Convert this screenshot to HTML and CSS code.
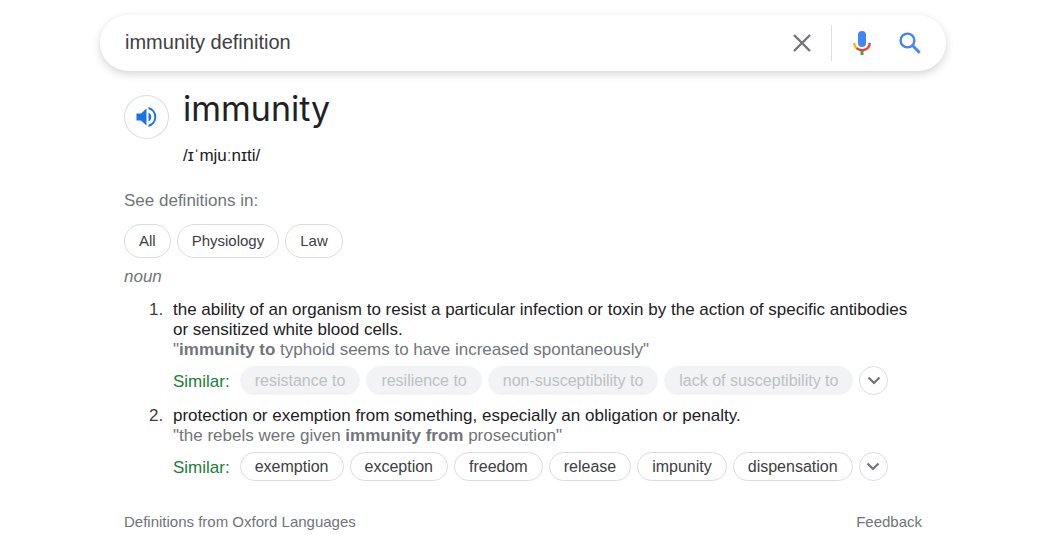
FILE: index.html
```html
<!DOCTYPE html>
<html lang="en">
<head>
<meta charset="utf-8">
<meta name="viewport" content="width=device-width, initial-scale=1">
<title>immunity definition</title>
<link rel="stylesheet" href="styles.css">
</head>
<body>
<main class="page">
  <form class="search" role="search">
    <input class="search-input" type="text" value="immunity definition" aria-label="Search">
    <button class="icon-button" type="reset" aria-label="Clear">
      <svg width="18" height="18" viewBox="0 0 18 18" fill="none" stroke="#70757a" stroke-width="2.4"><path d="M1 1l16 16M17 1L1 17"/></svg>
    </button>
    <span class="divider"></span>
    <button class="icon-button" type="button" aria-label="Search by voice">
      <svg width="18" height="26" viewBox="0 0 18 26" fill="none">
        <rect x="5" y="1" width="8" height="16" rx="4" fill="#4285f4"/>
        <path d="M9 20v5" stroke="#34a853" stroke-width="3"/>
        <path d="M1.200 13a7.800 7.600 0 0 0 3 5.700" stroke="#fbbc05" stroke-width="2.400"/>
        <path d="M3.700 18.200a7.800 7.600 0 0 0 13.100-5.200" stroke="#ea4335" stroke-width="2.400"/>
      </svg>
    </button>
    <button class="icon-button" type="submit" aria-label="Search">
      <svg width="22" height="22" viewBox="0 0 22 22" fill="none" stroke="#4285f4"><circle cx="8.500" cy="8.500" r="6.900" stroke-width="2.400"/><path d="M13.500 13.500l7.200 7.200" stroke-width="2.800"/></svg>
    </button>
  </form>

  <article class="entry">
    <header class="headword">
      <button class="speak" type="button" aria-label="Listen">
        <svg width="22" height="22" viewBox="0 0 22 22" fill="#1a73e8"><path d="M0.500 7.500v7h4.500l5.500 5V2.500L5 7.500z"/><path d="M12.500 6.500v9a5 5 0 0 0 0-9z"/><path d="M12.500 1v2.300a8 8 0 0 1 0 15.400V21a10.300 10.300 0 0 0 0-20z"/></svg>
      </button>
      <div>
        <h1 class="word">immunity</h1>
        <p class="phonetic">/ɪˈmjuːnɪti/</p>
      </div>
    </header>

    <p class="see">See definitions in:</p>
    <div class="chips">
      <button class="chip topic" type="button">All</button>
      <button class="chip topic" type="button">Physiology</button>
      <button class="chip topic" type="button">Law</button>
    </div>
    <p class="pos">noun</p>

    <ol class="senses">
      <li class="sense">
        <div>
          <p>the ability of an organism to resist a particular infection or toxin by the action of specific antibodies or sensitized white blood cells.</p>
          <p class="example">"<b>immunity to</b> typhoid seems to have increased spontaneously"</p>
          <div class="similar">
            <span class="label">Similar:</span>
            <div class="chips">
              <button class="chip muted" type="button">resistance to</button>
              <button class="chip muted" type="button">resilience to</button>
              <button class="chip muted" type="button">non-susceptibility to</button>
              <button class="chip muted" type="button">lack of susceptibility to</button>
              <button class="more" type="button" aria-label="More similar words"><svg width="14" height="10" viewBox="0 0 14 10" fill="none" stroke="#70757a" stroke-width="2.200"><path d="M1.500 1.500L7 7l5.500-5.500"/></svg></button>
            </div>
          </div>
        </div>
      </li>
      <li class="sense">
        <div>
          <p>protection or exemption from something, especially an obligation or penalty.</p>
          <p class="example">"the rebels were given <b>immunity from</b> prosecution"</p>
          <div class="similar">
            <span class="label">Similar:</span>
            <div class="chips">
              <button class="chip" type="button">exemption</button>
              <button class="chip" type="button">exception</button>
              <button class="chip" type="button">freedom</button>
              <button class="chip" type="button">release</button>
              <button class="chip" type="button">impunity</button>
              <button class="chip" type="button">dispensation</button>
              <button class="more" type="button" aria-label="More similar words"><svg width="14" height="10" viewBox="0 0 14 10" fill="none" stroke="#70757a" stroke-width="2.200"><path d="M1.500 1.500L7 7l5.500-5.500"/></svg></button>
            </div>
          </div>
        </div>
      </li>
    </ol>

    <footer class="footer">
      <a class="link" href="#languages">Definitions from Oxford Languages</a>
      <a class="link" href="#feedback">Feedback</a>
    </footer>
  </article>
</main>
</body>
</html>
```
FILE: styles.css
```css
* { box-sizing: border-box; }

body {
  margin: 0;
  background: #fff;
  color: #202124;
  font: 17px/20px "Liberation Sans", Arial, sans-serif;
}

p, h1, ol { margin: 0; padding: 0; }
button { font-family: inherit; cursor: pointer; }
svg { display: block; }

.page { padding: 15px 114px 16px 100px; }

.search {
  display: flex;
  align-items: center;
  height: 56px;
  padding: 0 22px 0 25px;
  border-radius: 28px;
  background: #fff;
  box-shadow: 0 3px 9px rgba(64, 60, 67, 0.22);
}

.search-input {
  flex: 1;
  min-width: 0;
  padding: 0 0 3px;
  border: 0;
  outline: 0;
  background: none;
  color: #3c4043;
  font: 20px/24px "Liberation Sans", Arial, sans-serif;
}

.icon-button {
  display: grid;
  place-items: center;
  width: 28px;
  height: 36px;
  margin-left: 20px;
  padding: 0;
  border: 0;
  background: none;
}

.divider {
  width: 1px;
  height: 36px;
  margin-left: 15px;
  margin-right: -4px;
  background: #dadce0;
}

.entry { padding: 16px 24px 0; }

.headword { display: flex; gap: 14px; }

.speak {
  display: grid;
  place-items: center;
  width: 45px;
  height: 44px;
  margin-top: 8px;
  padding: 0;
  border: 1px solid #dadce0;
  border-radius: 50%;
  background: #fff;
}

.word {
  font: 400 34px/44px "Inter", "Open Sans", sans-serif;
}

.phonetic { margin-top: 15px; }

.see {
  margin-top: 25px;
  color: #70757a;
}

.chips {
  display: flex;
  flex-wrap: wrap;
  gap: 6px;
}

.see + .chips { margin-top: 13px; }

.chip {
  height: 29px;
  padding: 0 14px;
  border: 1px solid #dadce0;
  border-radius: 18px;
  background: #fff;
  color: #3c4043;
  font-size: 16px;
  line-height: 20px;
}

.topic {
  height: 34px;
  font-size: 15px;
}

.muted {
  border-color: #f1f3f4;
  background: #f1f3f4;
  color: #bdc1c6;
}

.pos {
  margin-top: 9px;
  color: #70757a;
  font-style: italic;
}

.senses {
  margin-top: 13px;
  padding-left: 25px;
  list-style: none;
  counter-reset: sense;
}

.sense {
  display: grid;
  grid-template-columns: 24px 1fr;
  counter-increment: sense;
}

.sense::before {
  content: counter(sense) ".";
  color: #3c4043;
}

.sense + .sense { margin-top: 11px; }

.example { color: #70757a; }

.similar {
  display: flex;
  align-items: center;
  gap: 10px;
  margin-top: 6px;
}

.label {
  padding-top: 3px;
  color: #188038;
}

.more {
  display: grid;
  place-items: center;
  width: 29px;
  height: 29px;
  padding: 0;
  border: 1px solid #dadce0;
  border-radius: 50%;
  background: #fff;
}

.footer {
  display: flex;
  justify-content: space-between;
  margin-top: 31px;
}

.link {
  color: #70757a;
  font-size: 15px;
  text-decoration: none;
}
```
